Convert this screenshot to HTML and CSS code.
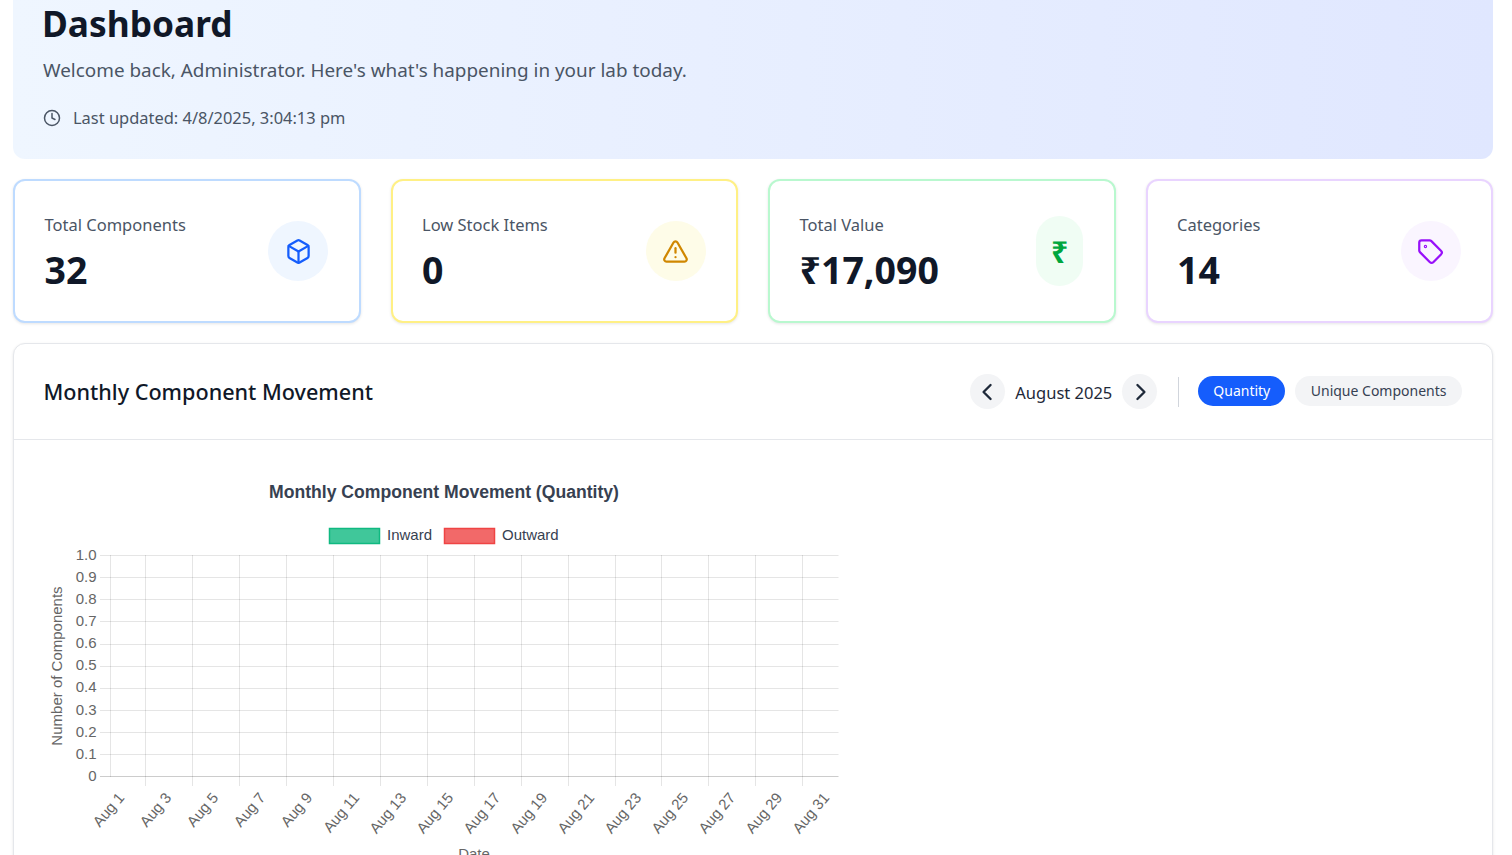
FILE: index.html
```html
<!DOCTYPE html>
<html lang="en">
<head>
<meta charset="utf-8">
<title>Dashboard</title>
<link rel="stylesheet" href="styles.css">
</head>
<body>
<main class="page">
  <header class="hero">
    <h1 class="hero-title">Dashboard</h1>
    <p class="hero-sub">Welcome back, Administrator. Here's what's happening in your lab today.</p>
    <div class="hero-meta">
      <svg class="clock" viewBox="0 0 24 24"><circle cx="12" cy="12" r="10"/><polyline points="12 6 12 12 16 14"/></svg>
      <span>Last updated: 4/8/2025, 3:04:13 pm</span>
    </div>
  </header>

  <section class="stats">
    <article class="stat stat-blue">
      <div class="stat-text"><div class="stat-label">Total Components</div><div class="stat-value">32</div></div>
      <div class="stat-icon"><svg viewBox="0 0 24 24"><path d="M21 8a2 2 0 0 0-1-1.73l-7-4a2 2 0 0 0-2 0l-7 4A2 2 0 0 0 3 8v8a2 2 0 0 0 1 1.73l7 4a2 2 0 0 0 2 0l7-4A2 2 0 0 0 21 16Z"/><path d="m3.3 7 8.7 5 8.7-5"/><path d="M12 22V12"/></svg></div>
    </article>
    <article class="stat stat-yellow">
      <div class="stat-text"><div class="stat-label">Low Stock Items</div><div class="stat-value">0</div></div>
      <div class="stat-icon"><svg viewBox="0 0 24 24"><path d="m21.73 18-8-14a2 2 0 0 0-3.48 0l-8 14A2 2 0 0 0 4 21h16a2 2 0 0 0 1.73-3"/><path d="M12 9v4"/><path d="M12 17h.01"/></svg></div>
    </article>
    <article class="stat stat-green">
      <div class="stat-text"><div class="stat-label">Total Value</div><div class="stat-value">₹17,090</div></div>
      <div class="stat-icon stat-icon-text">₹</div>
    </article>
    <article class="stat stat-purple">
      <div class="stat-text"><div class="stat-label">Categories</div><div class="stat-value">14</div></div>
      <div class="stat-icon"><svg viewBox="0 0 24 24"><path d="M12.586 2.586A2 2 0 0 0 11.172 2H4a2 2 0 0 0-2 2v7.172a2 2 0 0 0 .586 1.414l8.704 8.704a2.426 2.426 0 0 0 3.42 0l6.58-6.58a2.426 2.426 0 0 0 0-3.42z"/><circle cx="7.5" cy="7.5" r=".5"/></svg></div>
    </article>
  </section>

  <section class="panel">
    <div class="panel-head">
      <h2 class="panel-title">Monthly Component Movement</h2>
      <div class="controls">
        <button class="nav-btn"><svg viewBox="0 0 24 24"><path d="m14.2 18-6-6 6-6"/></svg></button>
        <span class="month">August 2025</span>
        <button class="nav-btn"><svg viewBox="0 0 24 24"><path d="m9.8 18 6-6-6-6"/></svg></button>
        <span class="divider"></span>
        <button class="pill pill-active">Quantity</button>
        <button class="pill">Unique Components</button>
      </div>
    </div>
    <div class="panel-body">
      <svg class="chart" viewBox="30 470 830 385" width="830" height="385">
        <text class="c-title" x="444" y="498">Monthly Component Movement (Quantity)</text>
        <rect class="lg-in" x="329.5" y="528.5" width="50" height="15"/>
        <text class="c-legend" x="387" y="540">Inward</text>
        <rect class="lg-out" x="444.5" y="528.5" width="50" height="15"/>
        <text class="c-legend" x="502" y="540">Outward</text>

        <path class="grid" d="M100 555.5H838.5M100 577.5H838.5M100 599.5H838.5M100 621.5H838.5M100 644.5H838.5M100 666.5H838.5M100 688.5H838.5M100 710.5H838.5M100 732.5H838.5M100 754.5H838.5"/>
        <path class="grid" d="M110.5 555V777M145.5 555V786M192.5 555V786M239.5 555V786M286.5 555V786M333.5 555V786M380.5 555V786M427.5 555V786M474.5 555V786M521.5 555V786M568.5 555V786M615.5 555V786M661.5 555V786M708.5 555V786M755.5 555V786M802.5 555V786"/>
        <path class="axis" d="M100 776.5H838.5"/>

        <text class="c-y" x="96.5" y="560">1.0</text>
        <text class="c-y" x="96.5" y="582">0.9</text>
        <text class="c-y" x="96.5" y="604">0.8</text>
        <text class="c-y" x="96.5" y="626">0.7</text>
        <text class="c-y" x="96.5" y="648">0.6</text>
        <text class="c-y" x="96.5" y="670">0.5</text>
        <text class="c-y" x="96.5" y="692">0.4</text>
        <text class="c-y" x="96.5" y="715">0.3</text>
        <text class="c-y" x="96.5" y="737">0.2</text>
        <text class="c-y" x="96.5" y="759">0.1</text>
        <text class="c-y" x="96.5" y="781">0</text>
        <text class="c-ytitle" transform="translate(62 666) rotate(-90)">Number of Components</text>

        <text class="c-x" transform="translate(125 798) rotate(-50)">Aug 1</text>
        <text class="c-x" transform="translate(172 798) rotate(-50)">Aug 3</text>
        <text class="c-x" transform="translate(219 798) rotate(-50)">Aug 5</text>
        <text class="c-x" transform="translate(266 798) rotate(-50)">Aug 7</text>
        <text class="c-x" transform="translate(313 798) rotate(-50)">Aug 9</text>
        <text class="c-x" transform="translate(360 798) rotate(-50)">Aug 11</text>
        <text class="c-x" transform="translate(407 798) rotate(-50)">Aug 13</text>
        <text class="c-x" transform="translate(454 798) rotate(-50)">Aug 15</text>
        <text class="c-x" transform="translate(501 798) rotate(-50)">Aug 17</text>
        <text class="c-x" transform="translate(548 798) rotate(-50)">Aug 19</text>
        <text class="c-x" transform="translate(595 798) rotate(-50)">Aug 21</text>
        <text class="c-x" transform="translate(642 798) rotate(-50)">Aug 23</text>
        <text class="c-x" transform="translate(689 798) rotate(-50)">Aug 25</text>
        <text class="c-x" transform="translate(736 798) rotate(-50)">Aug 27</text>
        <text class="c-x" transform="translate(783 798) rotate(-50)">Aug 29</text>
        <text class="c-x" transform="translate(830 798) rotate(-50)">Aug 31</text>
        <text class="c-xtitle" x="474" y="859">Date</text>
      </svg>
    </div>
  </section>
</main>
</body>
</html>
```
FILE: styles.css
```css
* { box-sizing: border-box; }
html, body { margin: 0; height: 855px; overflow: hidden; background: #fff; }
body { font-family: "Noto Sans", "Open Sans", sans-serif; color: #101828; }

.page { padding: 0 19px 0 13px; display: flex; flex-direction: column; gap: 20px; }

.hero {
  height: 159px;
  padding: 0 30px;
  border-radius: 0 0 12px 12px;
  background: linear-gradient(90deg, #eff6ff, #e0e7ff);
}
.hero-title { margin: -1px 0 0 -1px; font-size: 35.3px; line-height: 48px; font-weight: 700; color: #101828; }
.hero-sub { margin: 9px 0 0; font-size: 18.9px; line-height: 28px; color: #4a5565; }
.hero-meta { display: flex; align-items: center; gap: 12px; margin-top: 22px; font-size: 16.45px; line-height: 24px; color: #4a5565; }
.clock { width: 18px; height: 18px; fill: none; stroke: #4a5565; stroke-width: 2; stroke-linecap: round; stroke-linejoin: round; }

.stats { display: grid; grid-template-columns: repeat(4, 1fr); gap: 30px; }
.stat {
  height: 144px;
  padding: 0 30.5px 0 29.5px;
  display: flex;
  align-items: center;
  justify-content: space-between;
  background: #fff;
  border: 2px solid;
  border-radius: 12px;
  box-shadow: 0 1px 3px rgba(0,0,0,.1);
}
.stat-label { font-size: 16.5px; line-height: 24px; color: #4a5565; margin-top: 5px; }
.stat-value { margin-top: 9px; font-size: 37.5px; line-height: 48px; font-weight: 700; color: #101828; }
.stat-icon { width: 60px; height: 60px; border-radius: 999px; display: flex; align-items: center; justify-content: center; flex-shrink: 0; }
.stat-icon svg { width: 27px; height: 27px; fill: none; stroke: currentColor; stroke-width: 2; stroke-linecap: round; stroke-linejoin: round; }
.stat-icon-text { width: 47px; height: 70px; font-size: 30px; font-weight: 700; }

.stat-blue { border-color: #bedbff; }
.stat-blue .stat-icon { background: #eff6ff; color: #155dfc; }
.stat-yellow { border-color: #fff085; }
.stat-yellow .stat-icon { background: #fefce8; color: #d08700; }
.stat-green { border-color: #b9f8cf; }
.stat-green .stat-icon { background: #f0fdf4; color: #00a63e; }
.stat-purple { border-color: #e9d4ff; }
.stat-purple .stat-icon { background: #faf5ff; color: #9810fa; }

.panel { border: 1px solid #e5e7eb; border-radius: 12px; box-shadow: 0 1px 3px rgba(0,0,0,.1); background: #fff; height: 700px; }
.panel-head { height: 96px; padding: 0 30px 0 29.5px; display: flex; align-items: center; justify-content: space-between; border-bottom: 1px solid #e5e7eb; }
.panel-title { margin: 0; font-size: 21.6px; line-height: 28px; font-weight: 500; color: #101828; }
.controls { display: flex; align-items: center; }
.nav-btn { width: 35px; height: 35px; padding: 0; border: 0; border-radius: 999px; background: #f3f4f6; display: flex; align-items: center; justify-content: center; }
.nav-btn svg { width: 28px; height: 28px; fill: none; stroke: #1e2939; stroke-width: 2; stroke-linecap: round; stroke-linejoin: round; }
.month { width: 117px; padding-top: 2px; text-align: center; font-size: 16.5px; color: #1e2939; }
.divider { width: 1px; height: 30px; margin: 0 19px 0 21px; background: #d1d5dc; }
.pill { height: 30px; padding: 0 15.5px; border: 0; border-radius: 999px; background: #f3f4f6; color: #364153; font: 14px/30px "Noto Sans", sans-serif; margin: 0 0 1px 10px; }
.pill-active { margin-left: 0; padding: 0 15px; background: #155dfc; color: #fff; }

.panel-body { padding: 30px 0 0 16px; }
.chart { display: block; font-family: "Liberation Sans", Arial, sans-serif; }
.c-title { font-size: 17.6px; font-weight: 700; fill: #374151; text-anchor: middle; }
.c-legend { font-size: 15px; fill: #374151; }
.lg-in { fill: rgba(16,185,129,.8); stroke: #10b981; stroke-width: 1.5; }
.lg-out { fill: rgba(239,68,68,.8); stroke: #ef4444; stroke-width: 1.5; }
.grid { fill: none; stroke: rgba(0,0,0,.1); stroke-width: 1; }
.axis { fill: none; stroke: rgba(0,0,0,.2); stroke-width: 1; }
.c-y { font-size: 15px; fill: #666; text-anchor: end; }
.c-ytitle { font-size: 15px; fill: #666; text-anchor: middle; }
.c-x { font-size: 15px; fill: #666; text-anchor: end; }
.c-xtitle { font-size: 15px; fill: #666; text-anchor: middle; }
```
